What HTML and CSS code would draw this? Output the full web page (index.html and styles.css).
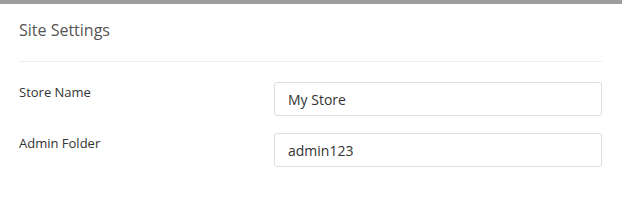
FILE: index.html
```html
<!DOCTYPE html>
<html>
  <head>
    <title>Site Settings</title>
    <link rel="stylesheet" href="styles.css">
  </head>
  <body>
    <div class="panel">
      <h2 class="panel-title">Site Settings</h2>

      <div class="field">
        <label class="field-label" for="store-name">Store Name</label>
        <input class="field-input" id="store-name" type="text" value="My Store">
      </div>

      <div class="field">
        <label class="field-label" for="admin-folder">Admin Folder</label>
        <input class="field-input" id="admin-folder" type="text" value="admin123">
      </div>
    </div>
  </body>
</html>
```

FILE: styles.css
```css
body {
  margin: 0;
  font-family: "Open Sans", Arial, sans-serif;
  background-color: #fff;
}
.panel {
  border-top: 4px solid #9d9d9d;
  padding: 0 20px 0 19px;
}
.panel-title {
  margin: 0;
  padding: 15px 0 20px;
  font-size: 16px;
  font-weight: 400;
  color: #555;
  line-height: 22px;
  border-bottom: 1px solid #eee;
}
.field {
  display: flex;
  align-items: flex-start;
  margin-top: 20px;
}
.field + .field {
  margin-top: 17px;
}
.field-label {
  width: 255px;
  font-size: 13px;
  color: #333;
  line-height: 18px;
  padding-top: 1px;
}
.field-input {
  flex: 1;
  box-sizing: border-box;
  height: 34px;
  margin: 0;
  padding: 0 13px;
  font-family: "Open Sans", Arial, sans-serif;
  font-size: 14px;
  color: #333;
  border: 1px solid #ddd;
  border-radius: 3px;
  outline: none;
}
```
